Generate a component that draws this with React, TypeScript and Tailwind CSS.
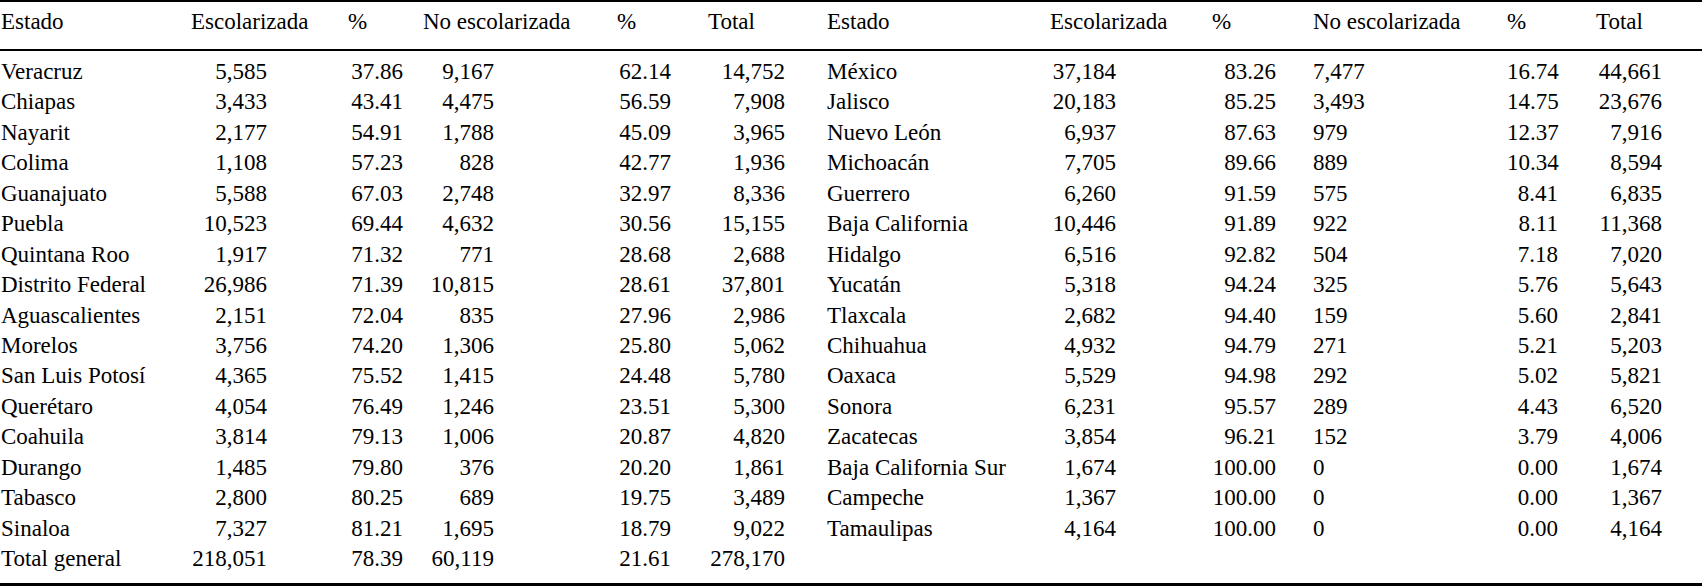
const left = [
  ["Veracruz", "5,585", "37.86", "9,167", "62.14", "14,752"],
  ["Chiapas", "3,433", "43.41", "4,475", "56.59", "7,908"],
  ["Nayarit", "2,177", "54.91", "1,788", "45.09", "3,965"],
  ["Colima", "1,108", "57.23", "828", "42.77", "1,936"],
  ["Guanajuato", "5,588", "67.03", "2,748", "32.97", "8,336"],
  ["Puebla", "10,523", "69.44", "4,632", "30.56", "15,155"],
  ["Quintana Roo", "1,917", "71.32", "771", "28.68", "2,688"],
  ["Distrito Federal", "26,986", "71.39", "10,815", "28.61", "37,801"],
  ["Aguascalientes", "2,151", "72.04", "835", "27.96", "2,986"],
  ["Morelos", "3,756", "74.20", "1,306", "25.80", "5,062"],
  ["San Luis Potosí", "4,365", "75.52", "1,415", "24.48", "5,780"],
  ["Querétaro", "4,054", "76.49", "1,246", "23.51", "5,300"],
  ["Coahuila", "3,814", "79.13", "1,006", "20.87", "4,820"],
  ["Durango", "1,485", "79.80", "376", "20.20", "1,861"],
  ["Tabasco", "2,800", "80.25", "689", "19.75", "3,489"],
  ["Sinaloa", "7,327", "81.21", "1,695", "18.79", "9,022"],
  ["Total general", "218,051", "78.39", "60,119", "21.61", "278,170"],
];

const right = [
  ["México", "37,184", "83.26", "7,477", "16.74", "44,661"],
  ["Jalisco", "20,183", "85.25", "3,493", "14.75", "23,676"],
  ["Nuevo León", "6,937", "87.63", "979", "12.37", "7,916"],
  ["Michoacán", "7,705", "89.66", "889", "10.34", "8,594"],
  ["Guerrero", "6,260", "91.59", "575", "8.41", "6,835"],
  ["Baja California", "10,446", "91.89", "922", "8.11", "11,368"],
  ["Hidalgo", "6,516", "92.82", "504", "7.18", "7,020"],
  ["Yucatán", "5,318", "94.24", "325", "5.76", "5,643"],
  ["Tlaxcala", "2,682", "94.40", "159", "5.60", "2,841"],
  ["Chihuahua", "4,932", "94.79", "271", "5.21", "5,203"],
  ["Oaxaca", "5,529", "94.98", "292", "5.02", "5,821"],
  ["Sonora", "6,231", "95.57", "289", "4.43", "6,520"],
  ["Zacatecas", "3,854", "96.21", "152", "3.79", "4,006"],
  ["Baja California Sur", "1,674", "100.00", "0", "0.00", "1,674"],
  ["Campeche", "1,367", "100.00", "0", "0.00", "1,367"],
  ["Tamaulipas", "4,164", "100.00", "0", "0.00", "4,164"],
  ["", "", "", "", "", ""],
];

// data alignment per column (12 columns, both halves)
const cellCls = [
  "pl-[1px] text-left",
  "pr-[81px] text-right",
  "pr-[20px] text-right",
  "pr-[123px] text-right",
  "pr-[37px] text-right",
  "pr-[42px] text-right",
  "text-left",
  "pr-[96px] text-right",
  "pr-[37px] text-right",
  "text-left",
  "pr-[38px] text-right",
  "pr-[40px] text-right",
];

const headers = [
  "Estado", "Escolarizada", "%", "No escolarizada", "%", "Total",
  "Estado", "Escolarizada", "%", "No escolarizada", "%", "Total",
];

const gridCols =
  "grid grid-cols-[191px_157px_75px_194px_91px_119px_223px_162px_101px_194px_89px_106px]";

export default function App() {
  return (
    <div className="w-[1702px] h-[586px] bg-white text-black font-['Liberation_Serif',serif] text-[23px] overflow-hidden">
      {/* top rule */}
      <div className="h-[2px] bg-black" />

      {/* header */}
      <div className={`${gridCols} pt-[5px] h-[47px] leading-[30px]`}>
        {headers.map((h, i) => (
          <div key={i} className={`whitespace-nowrap ${i === 0 ? "pl-[1px]" : ""}`}>
            {h}
          </div>
        ))}
      </div>

      <div className="h-[2px] bg-black" />

      {/* body */}
      <div className={`${gridCols} pt-[6px] h-[532px] auto-rows-[30.44px] leading-[30.44px]`}>
        {left.map((row, r) => {
          const cells = [...row, ...right[r]];
          return cells.map((c, i) => (
            <div key={`${r}-${i}`} className={`whitespace-nowrap ${cellCls[i]}`}>
              {c}
            </div>
          ));
        })}
      </div>

      {/* bottom rule */}
      <div className="h-[3px] bg-black" />
    </div>
  );
}
